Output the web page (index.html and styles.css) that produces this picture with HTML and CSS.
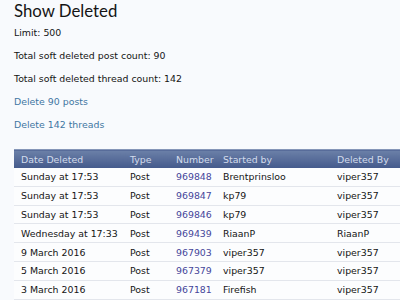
FILE: index.html
```html
<!DOCTYPE html>
<html>
<head>
<meta charset="utf-8">
<link rel="stylesheet" href="styles.css">
</head>
<body>
<div class="page">
  <h1 class="title">Show Deleted</h1>
  <p class="line">Limit: 500</p>
  <p class="line">Total soft deleted post count: 90</p>
  <p class="line">Total soft deleted thread count: 142</p>
  <p class="line"><a class="action" href="#">Delete 90 posts</a></p>
  <p class="line"><a class="action" href="#">Delete 142 threads</a></p>
  <table class="grid">
    <colgroup>
      <col class="c-date"><col class="c-type"><col class="c-num"><col class="c-start"><col class="c-del">
    </colgroup>
    <thead>
      <tr><th>Date Deleted</th><th>Type</th><th>Number</th><th>Started by</th><th>Deleted By</th></tr>
    </thead>
    <tbody>
      <tr><td>Sunday at 17:53</td><td>Post</td><td><a class="num" href="#">969848</a></td><td>Brentprinsloo</td><td>viper357</td></tr>
      <tr><td>Sunday at 17:53</td><td>Post</td><td><a class="num" href="#">969847</a></td><td>kp79</td><td>viper357</td></tr>
      <tr><td>Sunday at 17:53</td><td>Post</td><td><a class="num" href="#">969846</a></td><td>kp79</td><td>viper357</td></tr>
      <tr><td>Wednesday at 17:33</td><td>Post</td><td><a class="num" href="#">969439</a></td><td>RiaanP</td><td>RiaanP</td></tr>
      <tr><td>9 March 2016</td><td>Post</td><td><a class="num" href="#">967903</a></td><td>viper357</td><td>viper357</td></tr>
      <tr><td>5 March 2016</td><td>Post</td><td><a class="num" href="#">967379</a></td><td>viper357</td><td>viper357</td></tr>
      <tr><td>3 March 2016</td><td>Post</td><td><a class="num" href="#">967181</a></td><td>Firefish</td><td>viper357</td></tr>
    </tbody>
  </table>
</div>
</body>
</html>
```
FILE: styles.css
```css
html, body {
  margin: 0;
  padding: 0;
  background: #f8fafd;
  overflow: hidden;
}
body {
  font-family: "DejaVu Sans", Verdana, sans-serif;
  font-size: 9.4px;
  color: #141414;
}
.page {
  padding: 0 0 0 14px;
  width: 386px;
  overflow: hidden;
}
.title {
  font-family: Lato, "Open Sans", sans-serif;
  font-weight: normal;
  font-size: 16.8px;
  line-height: 22px;
  margin: 0;
  color: #141414;
}
.line {
  margin: 0;
  height: 23px;
  line-height: 23px;
}
.title + .line {
  height: 22px;
  line-height: 22px;
}
.action {
  color: #3f76a2;
  text-decoration: none;
}
.grid {
  margin-top: 13px;
  border-collapse: collapse;
  table-layout: fixed;
  width: 406px;
}
.grid th {
  text-align: left;
  font-weight: normal;
  color: #d3dcec;
  height: 18px;
  padding: 0 0 0 7px;
  background: linear-gradient(#6b80a8, #44598b);
  border-top: 1px solid #8596b8;
  white-space: nowrap;
  overflow: hidden;
}
.grid td {
  height: 17.8px;
  padding: 0 0 0 7px;
  background: #fcfdfe;
  border-bottom: 1px solid #e3e6ec;
  white-space: nowrap;
  overflow: hidden;
}
.c-date { width: 109px; }
.c-type { width: 46px; }
.c-num { width: 47px; }
.c-start { width: 114px; }
.c-del { width: 90px; }
.num {
  color: #45459a;
  text-decoration: none;
}
```
